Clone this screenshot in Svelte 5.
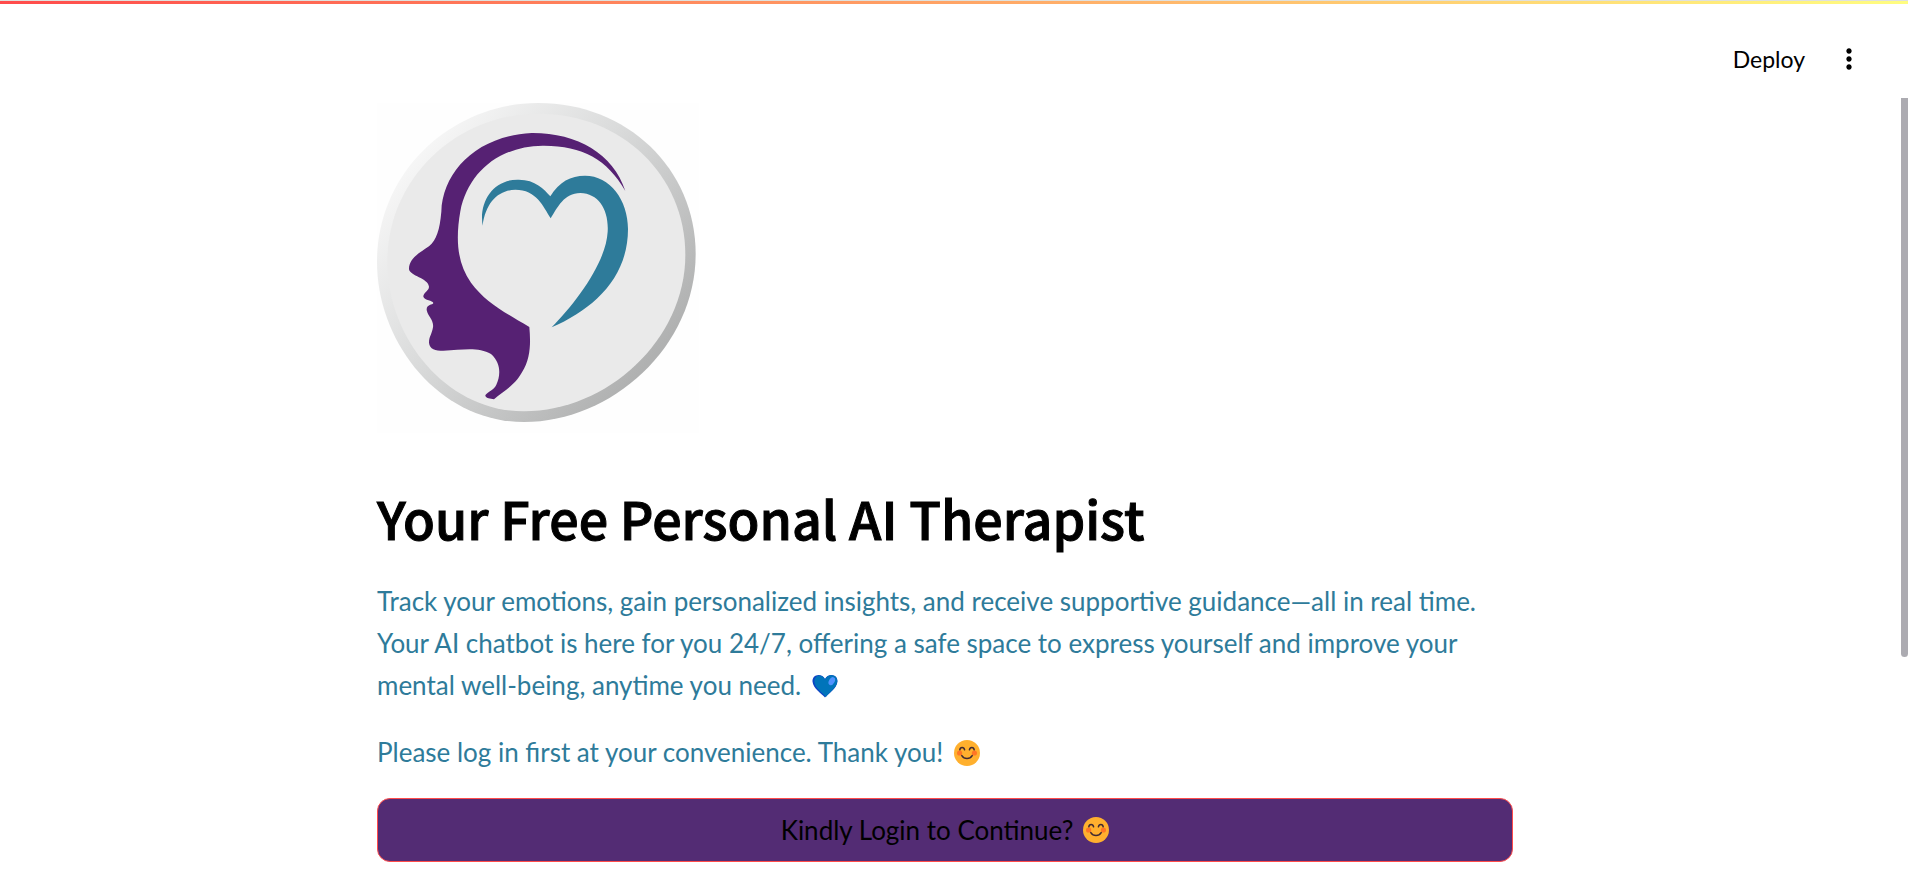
<script>
  let loggedIn = $state(false);
</script>

{#snippet smile()}
  <svg class="emoji" viewBox="0 0 26 26" role="img" aria-label="smiling face">
    <circle cx="13" cy="13" r="13" fill="#ffb02e" />
    <circle cx="5.6" cy="13" r="2.6" fill="#ff6723" opacity="0.8" />
    <circle cx="20.4" cy="13" r="2.6" fill="#ff6723" opacity="0.8" />
    <path d="M5.8 9.8C6.2 6.6 10 6.6 10.6 9.8M15.4 9.8C16 6.6 19.8 6.6 20.2 9.8M7.8 15.6C10.2 19.4 15.8 19.4 18.2 15.6" fill="none" stroke="#402a32" stroke-width="1.5" stroke-linecap="round" />
  </svg>
{/snippet}

<div class="decoration"></div>
<header>
  <button class="deploy" type="button">Deploy</button>
  <button class="menu" type="button" aria-label="Main menu">
    <svg viewBox="0 0 24 24" width="32" height="32" aria-hidden="true">
      <path d="M12 8c1.1 0 2-.9 2-2s-.9-2-2-2-2 .9-2 2 .9 2 2 2zm0 2c-1.1 0-2 .9-2 2s.9 2 2 2 2-.9 2-2-.9-2-2-2zm0 6c-1.1 0-2 .9-2 2s.9 2 2 2 2-.9 2-2-.9-2-2-2z" />
    </svg>
  </button>
</header>
<div class="thumb"></div>

<main>
  <svg class="logo" viewBox="51 39 966 990" role="img" aria-label="Head and heart logo">
    <defs>
      <linearGradient id="rim" x1="0.1" y1="0.15" x2="0.86" y2="0.8">
        <stop offset="0" stop-color="#f8f8f8" />
        <stop offset="0.45" stop-color="#dadbdb" />
        <stop offset="1" stop-color="#b0b1b1" />
      </linearGradient>
    </defs>
    <rect x="51" y="39" width="966" height="990" fill="#fefefe" />
    <path d="M535 39C800 39 1007 235 1007 492C1007 770 755 996 492 996C240 996 51 760 51 515C51 245 275 39 535 39Z" fill="url(#rim)" />
    <path d="M535 71C785 71 976 255 976 495C976 750 740 964 492 964C260 964 82 745 82 515C82 265 290 71 535 71Z" fill="#eaeaea" />
    <path d="M796 303C760 190 650 128 515 129C350 137 248 245 244 365C239 420 230 448 207 469C180 488 146 505 147 538C150 558 204 564 207 590C207 602 190 607 190 620C194 632 218 630 220 639C218 646 199 642 200 660C204 680 222 690 219 712C216 732 207 740 207 758C209 778 226 782 250 782C310 779 356 770 393 792C425 820 421 858 409 884C402 902 374 909 376 918C380 926 390 925 402 928C430 902 463 889 486 847C513 804 512 755 508 711C430 665 375 635 333 578C292 520 286 450 301 364C324 249 415 169 548 167C665 166 742 207 796 303Z" fill="#562173" />
    <path d="M368 407C356 335 400 268 474 269C525 268 552 297 571 319C598 275 632 257 675 257C750 257 804 330 804 417C804 564 700 658 575 712C648 638 738 518 743 425C747 362 717 310 661 309C612 309 592 353 572 385C550 349 529 299 466 299C416 300 377 336 368 407Z" fill="#2e7b9a" />
  </svg>

  <h1>Your Free Personal AI Therapist</h1>

  <p>
    Track your emotions, gain personalized insights, and receive supportive guidance—all in real time.
    Your AI chatbot is here for you 24/7, offering a safe space to express yourself and improve your
    mental well-being, anytime you need.
    <svg class="emoji" viewBox="0 0 26 26" role="img" aria-label="blue heart">
      <path d="M13 24.5C10 20.8 1 15.5 .5 8.5C.2 4.8 3 2 6.5 2C9.3 2 11.8 3.5 13 6C14.2 3.5 16.7 2 19.5 2C23 2 25.8 4.8 25.5 8.5C25 15.5 16 20.8 13 24.5Z" fill="#0d44c4" />
      <path d="M14 24C11 20 3 15.5 2.4 8.8C2.2 5.5 4.4 2.4 7.2 2.4C10 2.5 12.2 4.3 13 6.6C14.2 3.8 16.7 2.3 19.3 2.3C23 2.3 25.6 5 25.2 8.5C24.5 15.3 16.5 19.8 14 24Z" fill="#0074ba" />
      <ellipse cx="19.8" cy="8.2" rx="2.8" ry="4.3" transform="rotate(30 19.8 8.2)" fill="#5092ff" />
    </svg>
  </p>
  <p>Please log in first at your convenience. Thank you! {@render smile()}</p>

  <button class="login" type="button" onclick={() => (loggedIn = true)}>
    <span>Kindly Login to Continue?</span>
    {@render smile()}
  </button>
</main>

<style>
  :global(body) {
    margin: 0;
    background: #fff;
    color: #000;
    font-family: Lato, "Liberation Sans", sans-serif;
  }
  button {
    margin: 0;
    padding: 0;
    border: 0;
    background: none;
    color: inherit;
    font: inherit;
    cursor: pointer;
  }
  .decoration {
    height: 3px;
    border-top: 1px solid #dfe1de;
    background: linear-gradient(90deg, #ff4b4b, #fffd80);
  }
  header {
    display: flex;
    justify-content: flex-end;
    align-items: center;
    gap: 28px;
    height: 99px;
    padding: 10px 43px 0 0;
    box-sizing: border-box;
  }
  .deploy {
    font-size: 23px;
    line-height: 32px;
  }
  .menu svg {
    display: block;
  }
  .thumb {
    position: absolute;
    top: 98px;
    right: 0;
    width: 7px;
    height: 559px;
    border-radius: 0 0 4px 4px;
    background: #acabb1;
  }
  main {
    max-width: 1136px;
    margin: 0 auto;
    padding: 0 18px 16px 0;
  }
  .logo {
    display: block;
    width: 322px;
    height: 330px;
  }
  h1 {
    margin: 49px 0 26px;
    font-family: "Noto Sans CJK SC", sans-serif;
    font-size: 52px;
    font-weight: 500;
    line-height: 72px;
    -webkit-text-stroke: 1px #000;
  }
  p {
    margin: 0 0 25px;
    color: #2e7b9a;
    font-size: 26px;
    line-height: 42px;
  }
  .emoji {
    width: 26px;
    height: 26px;
    margin-left: 4px;
    vertical-align: -4px;
  }
  .login {
    display: flex;
    justify-content: center;
    align-items: center;
    gap: 6px;
    width: 100%;
    height: 64px;
    border: 1px solid #ff4b4b;
    border-radius: 13px;
    background: #532c74;
    font-size: 26px;
  }
</style>
